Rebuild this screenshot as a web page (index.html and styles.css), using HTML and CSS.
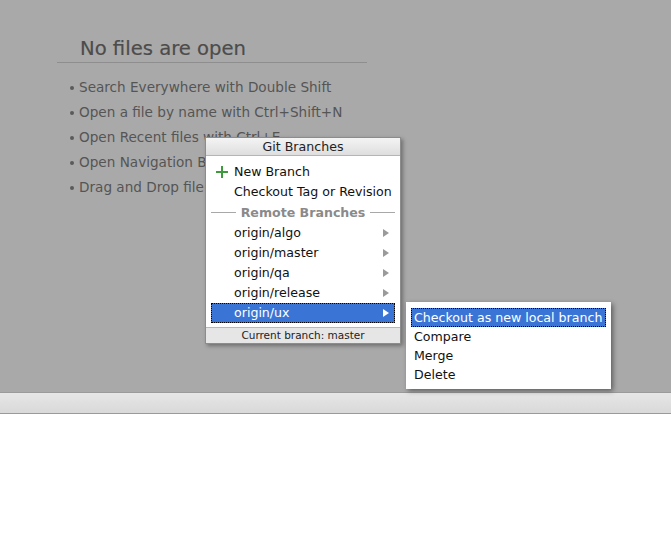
FILE: index.html
```html
<!DOCTYPE html>
<html>
<head>
<meta charset="utf-8">
<link rel="stylesheet" href="styles.css">
</head>
<body>
<div class="editor">
  <div class="empty">
    <h1 class="empty-title">No files are open</h1>
    <ul class="tips">
      <li>Search Everywhere with Double Shift</li>
      <li>Open a file by name with Ctrl+Shift+N</li>
      <li>Open Recent files with Ctrl+E</li>
      <li>Open Navigation Bar with Alt+Home</li>
      <li>Drag and Drop file(s) here from Nautilus</li>
    </ul>
  </div>
</div>
<div class="toolbar"></div>
<div class="bottom"></div>

<div class="popup">
  <div class="popup-head">Git Branches</div>
  <div class="popup-body">
    <div class="row"><svg class="plus" width="12" height="12" viewBox="0 0 12 12"><rect x="5" y="0" width="2" height="12" fill="#3d9a3d"/><rect x="0" y="5" width="12" height="2" fill="#3d9a3d"/></svg>New Branch</div>
    <div class="row">Checkout Tag or Revision</div>
    <div class="sep"><span class="sep-line"></span><span class="sep-text">Remote Branches</span><span class="sep-line"></span></div>
    <div class="row sub">origin/algo<span class="arrow"></span></div>
    <div class="row sub">origin/master<span class="arrow"></span></div>
    <div class="row sub">origin/qa<span class="arrow"></span></div>
    <div class="row sub">origin/release<span class="arrow"></span></div>
    <div class="row sub selected">origin/ux<span class="arrow"></span></div>
  </div>
  <div class="popup-foot">Current branch: master</div>
</div>

<div class="submenu">
  <div class="subrow selected">Checkout as new local branch</div>
  <div class="subrow">Compare</div>
  <div class="subrow">Merge</div>
  <div class="subrow">Delete</div>
</div>
</body>
</html>
```
FILE: styles.css
```css
html, body {
  margin: 0;
  padding: 0;
  background: #ffffff;
  font-family: "DejaVu Sans", sans-serif;
}
.editor {
  height: 392px;
  background: #a9a9a9;
  overflow: hidden;
}
.empty {
  padding: 38px 0 0 57px;
}
.empty-title {
  margin: 0;
  width: 287px;
  padding: 0 0 3px 23px;
  border-bottom: 1px solid #8e8e8e;
  font-size: 19.6px;
  font-weight: normal;
  color: #4c4c4c;
  line-height: 21px;
  -webkit-text-stroke: 0.2px #4c4c4c;
}
.tips {
  margin: 0;
  padding: 12px 0 0 22px;
  list-style: none;
}
.tips li {
  position: relative;
  font-size: 13.6px;
  line-height: 25px;
  color: #555555;
}
.tips li::before {
  content: "";
  position: absolute;
  left: -9px;
  top: 11px;
  width: 4px;
  height: 4px;
  border-radius: 50%;
  background: #5a5a5a;
}
.toolbar {
  height: 20px;
  border-top: 1px solid #9a9a9a;
  border-bottom: 1px solid #9a9a9a;
  background: linear-gradient(#e6e6e6, #d9d9d9);
}
.bottom {
  height: 140px;
}

.popup {
  position: absolute;
  left: 205px;
  top: 137px;
  width: 194px;
  border: 1px solid #8c8c8c;
  background: #ffffff;
  box-shadow: 2px 2px 4px rgba(0,0,0,0.35);
  font-size: 12.6px;
  color: #111111;
}
.popup-head {
  height: 17px;
  line-height: 17px;
  text-align: center;
  background: linear-gradient(#f4f4f4, #dedede);
  border-bottom: 1px solid #b5b5b5;
  color: #222222;
}
.popup-body {
  padding: 6px 5px 4px 5px;
}
.row {
  position: relative;
  height: 20px;
  line-height: 20px;
  padding-left: 23px;
  box-sizing: border-box;
}
.plus {
  position: absolute;
  left: 5px;
  top: 4px;
}
.arrow {
  position: absolute;
  right: 6px;
  top: 6px;
  width: 0;
  height: 0;
  border-top: 4px solid transparent;
  border-bottom: 4px solid transparent;
  border-left: 6px solid #9a9a9a;
}
.row.selected {
  background: #3a75d6;
  color: #ffffff;
  outline: 1px dotted #000000;
  outline-offset: -1px;
}
.row.selected .arrow {
  border-left-color: #ffffff;
}
.sep {
  display: flex;
  align-items: center;
  height: 21px;
  gap: 5px;
}
.sep-line {
  flex: 1;
  height: 1px;
  background: #a8a8a8;
}
.sep-text {
  font-weight: bold;
  color: #8a8a8a;
  font-size: 12.6px;
}
.popup-foot {
  height: 15px;
  line-height: 15px;
  margin-top: 0;
  border-top: 1px solid #b8b8b8;
  background: #e6e6e6;
  text-align: center;
  font-size: 10.5px;
  color: #222222;
}

.submenu {
  position: absolute;
  left: 406px;
  top: 302px;
  width: 195px;
  padding: 6px 5px 5px 5px;
  background: #ffffff;
  border: 0;
  box-shadow: 2px 2px 5px rgba(0,0,0,0.45);
  font-size: 12.6px;
  color: #111111;
}
.subrow {
  height: 19px;
  line-height: 19px;
  padding-left: 3px;
}
.subrow.selected {
  background: #3a75d6;
  color: #ffffff;
  outline: 1px dotted #000000;
  outline-offset: -1px;
}
```
